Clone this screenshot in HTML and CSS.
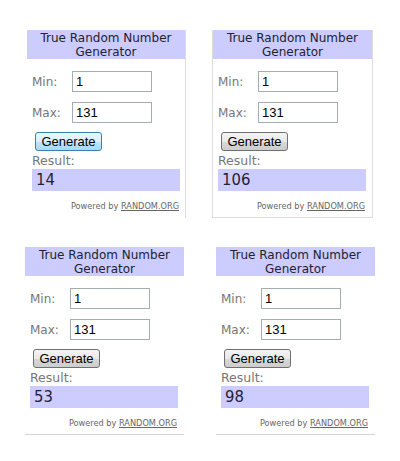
FILE: index.html
```html
<!DOCTYPE html>
<html>
<head>
<meta charset="utf-8">
<link rel="stylesheet" href="styles.css">
</head>
<body>
<div class="grid">
  <div class="card card-a">
    <div class="head">True Random Number<br>Generator</div>
    <div class="row row-min"><span class="lbl">Min:</span><span class="inp">1</span></div>
    <div class="row row-max"><span class="lbl">Max:</span><span class="inp">131</span></div>
    <button class="btn btn-hover">Generate</button>
    <div class="res-lbl">Result:</div>
    <div class="res">14</div>
    <div class="powered">Powered by <u>RANDOM.ORG</u></div>
  </div>
  <div class="card card-b">
    <div class="head">True Random Number<br>Generator</div>
    <div class="row row-min"><span class="lbl">Min:</span><span class="inp">1</span></div>
    <div class="row row-max"><span class="lbl">Max:</span><span class="inp">131</span></div>
    <button class="btn">Generate</button>
    <div class="res-lbl">Result:</div>
    <div class="res">106</div>
    <div class="powered">Powered by <u>RANDOM.ORG</u></div>
  </div>
  <div class="card card-c">
    <div class="head">True Random Number<br>Generator</div>
    <div class="row row-min"><span class="lbl">Min:</span><span class="inp">1</span></div>
    <div class="row row-max"><span class="lbl">Max:</span><span class="inp">131</span></div>
    <button class="btn">Generate</button>
    <div class="res-lbl">Result:</div>
    <div class="res">53</div>
    <div class="powered">Powered by <u>RANDOM.ORG</u></div>
  </div>
  <div class="card card-d">
    <div class="head">True Random Number<br>Generator</div>
    <div class="row row-min"><span class="lbl">Min:</span><span class="inp">1</span></div>
    <div class="row row-max"><span class="lbl">Max:</span><span class="inp">131</span></div>
    <button class="btn">Generate</button>
    <div class="res-lbl">Result:</div>
    <div class="res">98</div>
    <div class="powered">Powered by <u>RANDOM.ORG</u></div>
  </div>
</div>
</body>
</html>
```

FILE: styles.css
```css
html, body {
  margin: 0;
  padding: 0;
  background: #fff;
}
.grid {
  display: grid;
  grid-template-columns: 186px 160px;
  row-gap: 29px;
  padding: 30px 0 0 27px;
}
.card {
  box-sizing: border-box;
  width: 159px;
  height: 188px;
  display: flex;
  flex-direction: column;
  font-family: "DejaVu Sans", Verdana, sans-serif;
}
.card-a { border-right: 1px solid #dcdcdc; }
.card-b { border: 1px solid #dcdcdc; border-top: none; width: 161px; margin-left: -1px; }
.card-c { border-bottom: 1px solid #d4d4d4; margin-left: -2px; }
.card-d { border-bottom: 1px solid #d4d4d4; margin-left: 3px; }
.head {
  height: 29px;
  box-sizing: border-box;
  padding-top: 1px;
  background: #ccccff;
  color: #222233;
  font-size: 12px;
  line-height: 14px;
  text-align: center;
}
.row {
  display: flex;
  align-items: center;
  padding-left: 5px;
}
.row-min { margin-top: 12px; }
.row-max { margin-top: 10px; }
.lbl {
  width: 40px;
  color: #777;
  font-size: 12px;
}
.inp {
  box-sizing: border-box;
  width: 80px;
  height: 21px;
  border: 1px solid #a5acb2;
  padding: 0 3px;
  font-family: "Liberation Sans", Arial, sans-serif;
  font-size: 13px;
  line-height: 19px;
  color: #000;
}
.btn {
  align-self: flex-start;
  margin: 9px 0 0 8px;
  box-sizing: border-box;
  width: 67px;
  height: 19px;
  padding: 0;
  border: 1px solid #707070;
  border-radius: 3px;
  background: linear-gradient(#f4f4f4 0%, #e8e8e8 50%, #d8d8d8 51%, #cdcdcd 100%);
  font-family: "Liberation Sans", Arial, sans-serif;
  font-size: 13px;
  line-height: 17px;
  color: #000;
}
.btn-hover {
  border-color: #3c7fb1;
  background: linear-gradient(#eaf6fd 0%, #d9f0fc 50%, #bee6fd 51%, #a7d9f5 100%);
}
.res-lbl {
  margin: 2px 0 0 5px;
  height: 16px;
  color: #777;
  font-size: 12.5px;
  line-height: 16px;
}
.res {
  margin-left: 5px;
  width: 148px;
  height: 22px;
  background: #ccccff;
  color: #22223a;
  font-family: "DejaVu Sans Condensed", "DejaVu Sans", sans-serif;
  font-size: 16.5px;
  line-height: 22px;
  padding-left: 4px;
  box-sizing: border-box;
}
.powered {
  margin-top: 10px;
  width: 152px;
  text-align: right;
  color: #666;
  font-size: 8.2px;
  line-height: 11px;
}
```
